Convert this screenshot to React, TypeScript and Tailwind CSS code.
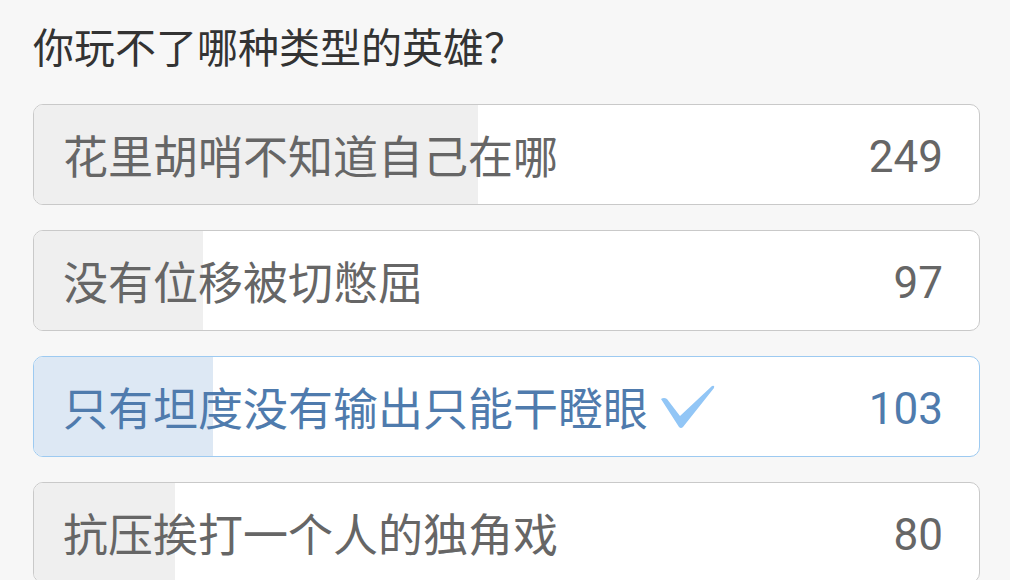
type Option = {
  label: string
  votes: number
  pct: number
  selected?: boolean
}

const options: Option[] = [
  { label: '花里胡哨不知道自己在哪', votes: 249, pct: 47 },
  { label: '没有位移被切憋屈', votes: 97, pct: 17.9 },
  { label: '只有坦度没有输出只能干瞪眼', votes: 103, pct: 18.9, selected: true },
  { label: '抗压挨打一个人的独角戏', votes: 80, pct: 14.9 },
]

function Check() {
  return (
    <svg width="56" height="44" viewBox="0 0 56 44" className="ml-[12px] shrink-0">
      <path d="M1 14 Q4 12 7 14 L20 31 L52 1 Q55 0 54 3 L23 42 Q21 44 19 42 Z" fill="#92c6f6" />
    </svg>
  )
}

function PollOption({ option }: { option: Option }) {
  const sel = option.selected
  return (
    <div
      className={`relative flex h-[101px] items-center overflow-hidden rounded-[10px] border bg-white pl-[29px] pr-[36px] ${
        sel ? 'border-[#9dcaf1] text-[#4f7bad]' : 'border-[#c9c9c9] text-[#666666]'
      }`}
    >
      <div
        className={`absolute inset-y-0 left-0 ${sel ? 'bg-[#dde8f4]' : 'bg-[#efefef]'}`}
        style={{ width: `${option.pct}%` }}
      />
      <div className="relative flex flex-1 items-center">
        <span className="text-[45px] leading-none">{option.label}</span>
        {sel && <Check />}
      </div>
      <span className="relative pt-[4px] font-['Roboto',sans-serif] text-[44px] leading-none">
        {option.votes}
      </span>
    </div>
  )
}

export default function App() {
  return (
    <div
      lang="zh-CN"
      className="min-h-[580px] w-[1010px] bg-[#f7f7f7] pl-[33px] pt-[17px] font-['Noto_Sans_CJK_SC','Noto_Sans',sans-serif]"
    >
      <h1 className="text-[41px] leading-[56px] text-[#333333]">你玩不了哪种类型的英雄？</h1>
      <div className="mt-[31px] flex w-[947px] flex-col gap-[25px]">
        {options.map((o) => (
          <PollOption key={o.label} option={o} />
        ))}
      </div>
    </div>
  )
}
